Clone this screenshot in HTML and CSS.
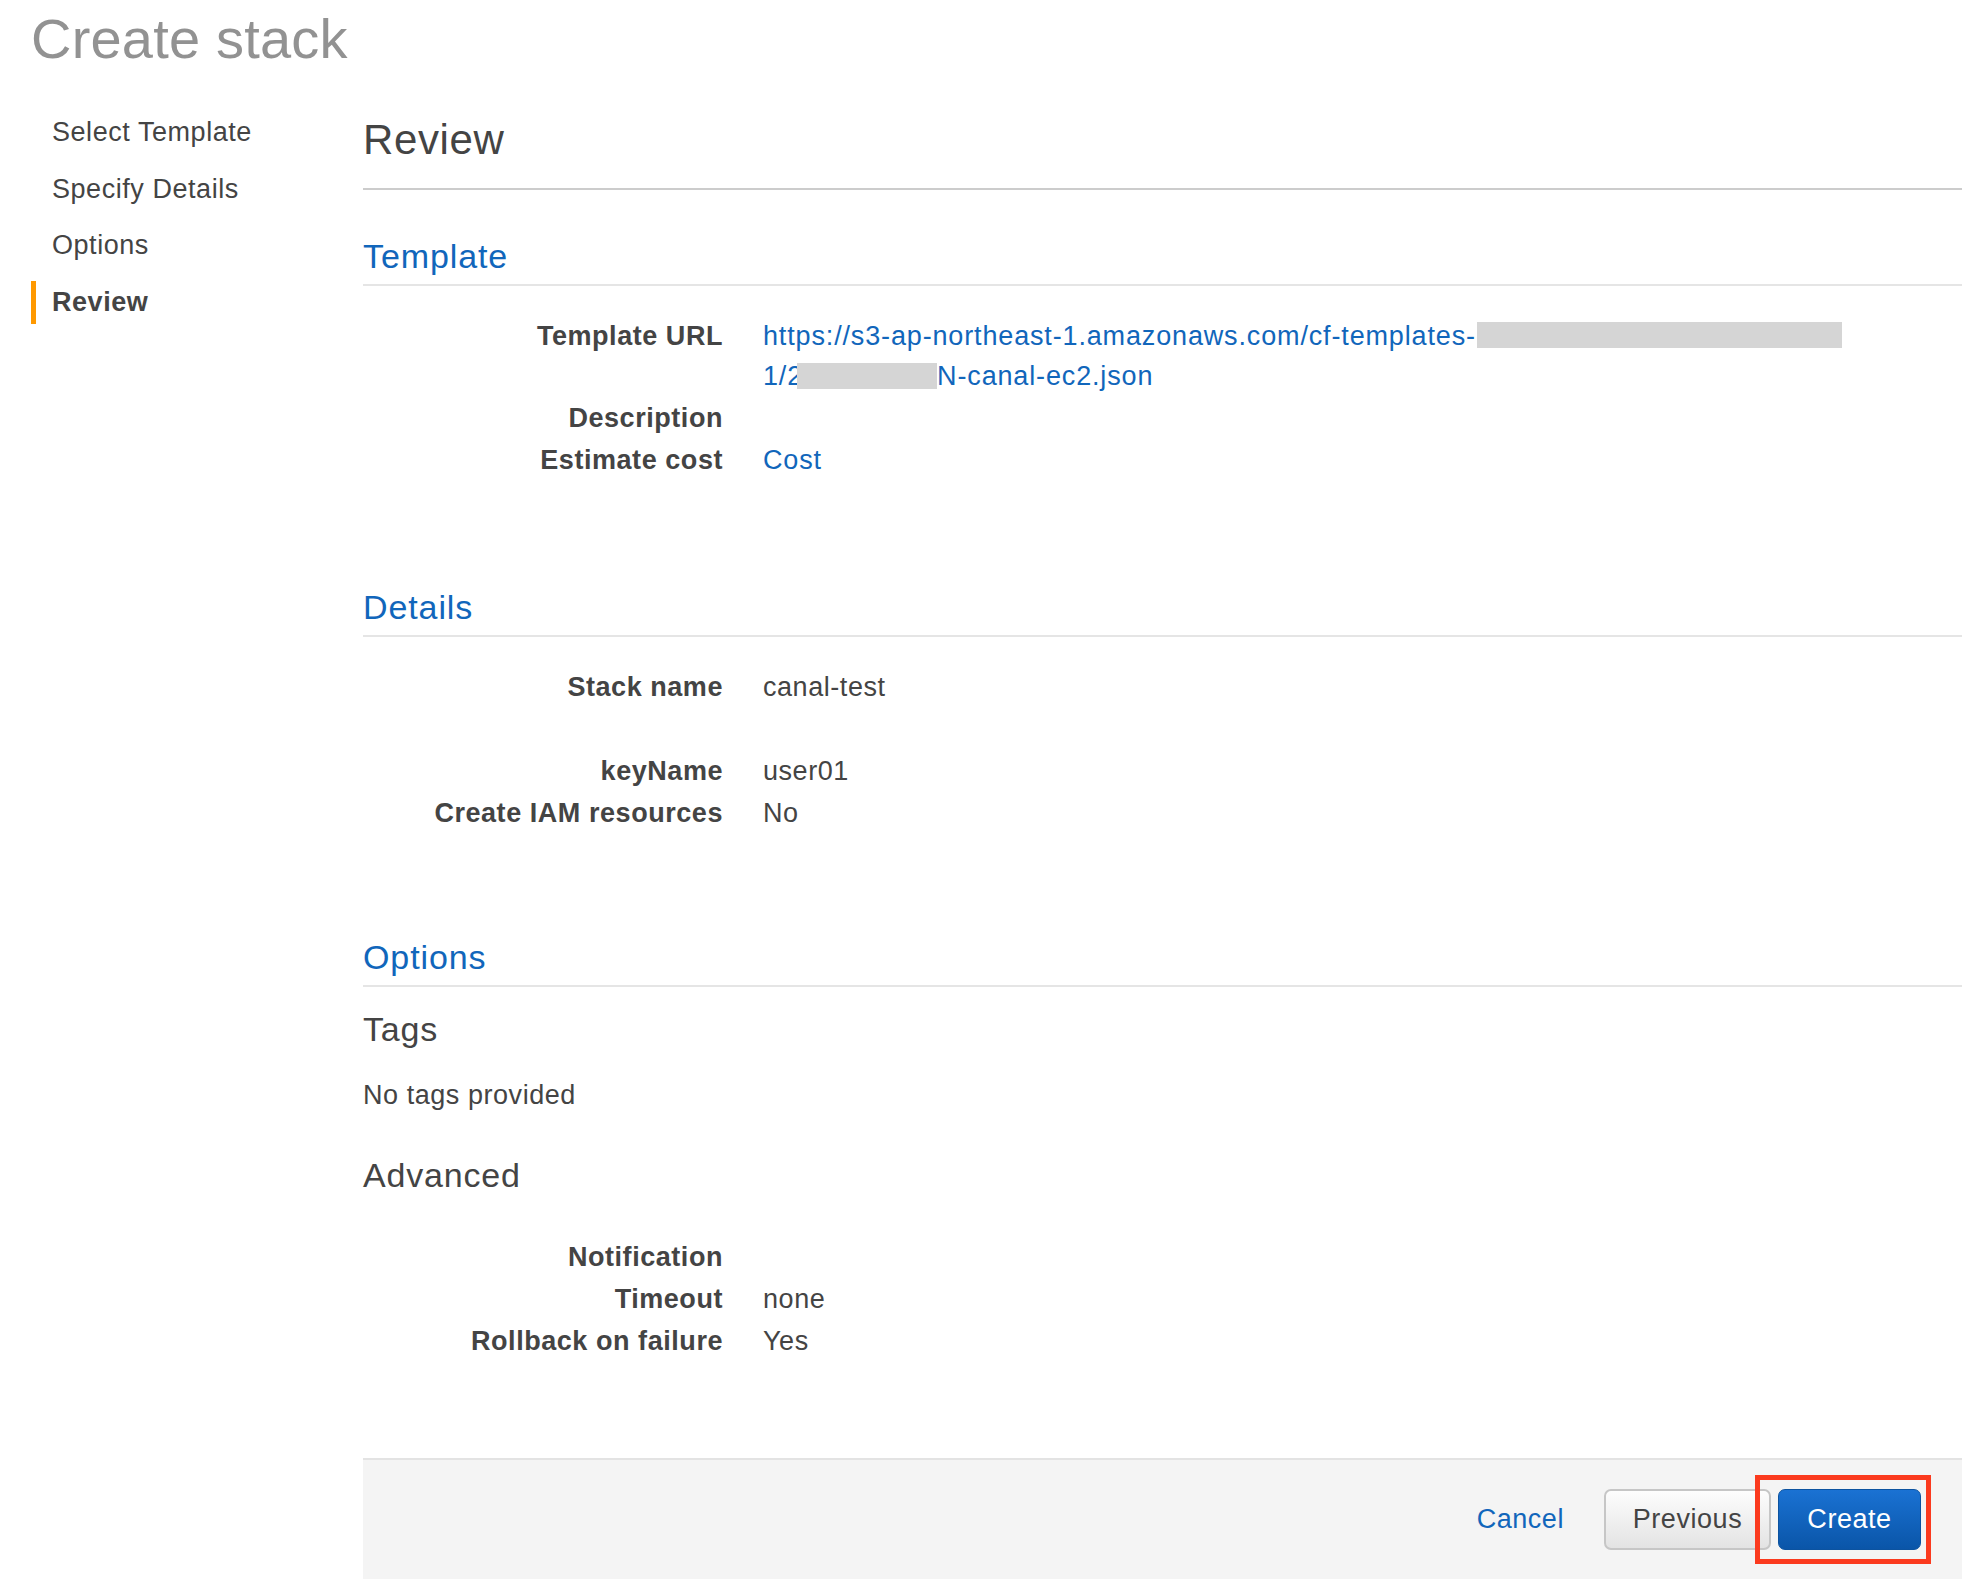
FILE: index.html
```html
<!DOCTYPE html>
<html lang="en">
<head>
<meta charset="utf-8">
<title>Create stack</title>
<link rel="stylesheet" href="styles.css">
</head>
<body>
<div class="page">
  <h1 class="page-title">Create stack</h1>
  <div class="layout">
    <nav class="steps">
      <div class="step">Select Template</div>
      <div class="step">Specify Details</div>
      <div class="step">Options</div>
      <div class="step active">Review</div>
    </nav>
    <main class="main">
      <h2 class="main-title">Review</h2>

      <section class="section">
        <h3 class="section-title">Template</h3>
        <div class="rows">
          <div class="label">Template URL</div>
          <div class="value"><a class="link" href="#">https://s3-ap-northeast-1.amazonaws.com/cf-templates-<span class="redact redact-1"></span><br>1/2<span class="redact redact-2"></span>N-canal-ec2.json</a></div>
          <div class="label">Description</div>
          <div class="value"></div>
          <div class="label">Estimate cost</div>
          <div class="value"><a class="link" href="#">Cost</a></div>
        </div>
      </section>

      <section class="section">
        <h3 class="section-title">Details</h3>
        <div class="rows">
          <div class="label">Stack name</div>
          <div class="value">canal-test</div>
          <div class="label"></div>
          <div class="value"></div>
          <div class="label">keyName</div>
          <div class="value">user01</div>
          <div class="label">Create IAM resources</div>
          <div class="value">No</div>
        </div>
      </section>

      <section class="section section-last">
        <h3 class="section-title">Options</h3>
        <h4 class="sub-title">Tags</h4>
        <p class="plain">No tags provided</p>
        <h4 class="sub-title sub-advanced">Advanced</h4>
        <div class="rows rows-advanced">
          <div class="label">Notification</div>
          <div class="value"></div>
          <div class="label">Timeout</div>
          <div class="value">none</div>
          <div class="label">Rollback on failure</div>
          <div class="value">Yes</div>
        </div>
      </section>

      <footer class="actions">
        <a class="cancel" href="#">Cancel</a>
        <button class="btn btn-secondary" type="button">Previous</button>
        <span class="highlight-wrap">
          <button class="btn btn-primary" type="button">Create</button>
          <span class="highlight"></span>
        </span>
      </footer>
    </main>
  </div>
</div>
</body>
</html>
```

FILE: styles.css
```css
* { box-sizing: border-box; }

html, body {
  margin: 0;
  padding: 0;
  background: #ffffff;
}

body {
  font-family: "Liberation Sans", Arial, Helvetica, sans-serif;
  font-size: 27px;
  line-height: 40px;
  letter-spacing: 0.55px;
  color: #444444;
}

.page {
  padding: 7px 24px 0 31px;
}

.page-title {
  margin: 0;
  font-size: 56px;
  line-height: 64px;
  font-weight: normal;
  letter-spacing: 0.2px;
  color: #929292;
}

.layout {
  display: flex;
}

.steps {
  width: 332px;
  flex: none;
  padding-top: 40px;
  display: flex;
  flex-direction: column;
  gap: 13.5px;
}

.step {
  line-height: 43px;
  padding-left: 16px;
  border-left: 5px solid transparent;
  color: #444444;
}

.step.active {
  border-left-color: #ff9900;
  font-weight: bold;
}

.main {
  flex: 1;
  padding-top: 44px;
}

.main-title {
  margin: 0;
  font-size: 42px;
  line-height: 50px;
  font-weight: normal;
  letter-spacing: 0.6px;
  color: #444444;
  padding-bottom: 22.6px;
  border-bottom: 2px solid #cccccc;
}

.section {
  margin-top: 46px;
}

.section + .section {
  margin-top: 107px;
}

.section-last {
  margin-top: 104px !important;
}

.section-title {
  margin: 0;
  font-size: 34px;
  line-height: 40px;
  font-weight: normal;
  letter-spacing: 0.9px;
  color: #1166bb;
  padding-bottom: 8.5px;
  border-bottom: 2px solid #e5e5e5;
}

.rows {
  display: grid;
  grid-template-columns: 360px 1fr;
  column-gap: 40px;
  row-gap: 2px;
  padding-top: 29.5px;
}

.label {
  text-align: right;
  font-weight: bold;
  color: #444444;
  min-height: 40px;
}

.value {
  color: #444444;
  min-height: 40px;
}

.link {
  color: #1166bb;
  text-decoration: none;
  letter-spacing: 0.85px;
}

.redact {
  display: inline-block;
  background: #d5d5d5;
  vertical-align: top;
}

.redact-1 {
  width: 365px;
  height: 26px;
  margin-top: 6px;
  margin-left: 1px;
}

.redact-2 {
  width: 140px;
  height: 26px;
  margin-top: 7px;
  margin-left: -6px;
}

.sub-title {
  margin: 21.5px 0 0;
  font-size: 34px;
  line-height: 40px;
  font-weight: normal;
  letter-spacing: 0.8px;
  color: #444444;
}

.plain {
  margin: 26px 0 0;
}

.sub-advanced {
  margin-top: 40px;
}

.rows-advanced {
  padding-top: 42px;
}

.actions {
  margin-top: 97px;
  border-top: 2px solid #e3e3e3;
  background: #f4f4f4;
  height: 121px;
  display: flex;
  align-items: center;
  justify-content: flex-end;
  padding: 0 41px 0 0;
  gap: 7px;
}

.cancel {
  color: #1166bb;
  text-decoration: none;
  margin-right: 33px;
}

.btn {
  font-family: "Liberation Sans", Arial, Helvetica, sans-serif;
  font-size: 27px;
  letter-spacing: 0.55px;
  height: 61px;
  padding: 0;
  border-radius: 7px;
  cursor: pointer;
}

.btn-secondary {
  color: #444444;
  background: linear-gradient(#fdfdfd, #e3e3e3);
  border: 2px solid #c6c6c6;
  width: 167px;
}

.btn-primary {
  color: #ffffff;
  background: linear-gradient(#1a72d3, #0a55a8);
  border: 1px solid #0c53a0;
  width: 143px;
  display: block;
}

.highlight-wrap {
  position: relative;
  display: block;
}

.highlight {
  position: absolute;
  left: -23px;
  right: -10px;
  top: -14px;
  bottom: -14px;
  border: 5px solid #fb3a1e;
  pointer-events: none;
}
```
